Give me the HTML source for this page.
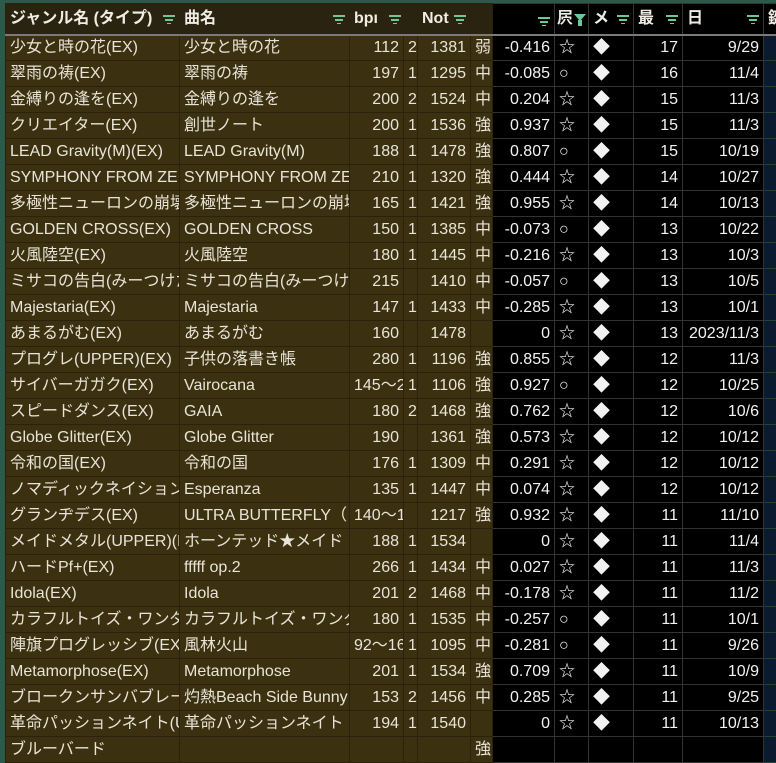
<!DOCTYPE html>
<html><head><meta charset="utf-8">
<style>
body{margin:0;width:776px;height:749px;overflow:hidden;background:#2b5a4a;font-family:"Liberation Sans","Noto Sans CJK JP",sans-serif;}
table{position:absolute;left:5px;top:3px;border-collapse:collapse;table-layout:fixed;width:786px;font-size:16px;color:#e8e4d8}
tr{height:26px}
td{height:26px;line-height:18px;padding:0 4px;white-space:nowrap;overflow:hidden;border:1px solid #2a220c;background:#3b300f;box-sizing:border-box;vertical-align:middle}
tr.h{height:31px}
tr.h td{height:31px;background:#2a2310;font-weight:bold;color:#f0ede4;border-bottom:2px solid #7a7a7a;position:relative}
td.k{background:#000;border-color:#333;color:#f2f2f2}
tr.h td.k{background:#000}
td.l{background:#0b1a2e;border-color:#243}
.r{text-align:right}
.f{display:inline-block;width:12px;height:9px;float:right;margin-top:5px;background:linear-gradient(#6cc79a,#6cc79a) 0 0/12px 2px no-repeat,linear-gradient(#6cc79a,#6cc79a) 2px 4px/8px 2px no-repeat,linear-gradient(#6cc79a,#6cc79a) 4px 8px/4px 1px no-repeat}
.fa{display:inline-block;float:right;margin-top:4px;width:0;height:0;border-left:6px solid transparent;border-right:6px solid transparent;border-top:7px solid #6cc79a;position:relative}
.fa:after{content:"";position:absolute;left:-2px;top:-1px;width:4px;height:6px;background:#6cc79a}
.d{font-size:17px}
</style></head><body>
<table>
<colgroup><col style="width:174px"><col style="width:170px"><col style="width:54px"><col style="width:14px"><col style="width:53px"><col style="width:22px"><col style="width:62px"><col style="width:34px"><col style="width:45px"><col style="width:49px"><col style="width:81px"><col style="width:28px"></colgroup>
<tr class="h"><td>ジャンル名 (タイプ)<span class="f"></span></td><td>曲名<span class="f"></span></td><td style="padding-right:2px">bpı<span class="f"></span></td><td></td><td>Not<span class="f"></span></td><td></td><td class="k"><span class="f"></span></td><td class="k" style="padding:0 2px">屄<span class="fa"></span></td><td class="k">メ<span class="f"></span></td><td class="k">最<span class="f"></span></td><td class="k">日<span class="f"></span></td><td class="k l">鍵</td></tr>
<tr><td>少女と時の花(EX)</td><td>少女と時の花</td><td class="r">112</td><td>2</td><td class="r">1381</td><td>弱</td><td class="k r">-0.416</td><td class="k">☆</td><td class="k d">◆</td><td class="k r">17</td><td class="k r">9/29</td><td class="k l"></td></tr>
<tr><td>翠雨の祷(EX)</td><td>翠雨の祷</td><td class="r">197</td><td>1</td><td class="r">1295</td><td>中</td><td class="k r">-0.085</td><td class="k">○</td><td class="k d">◆</td><td class="k r">16</td><td class="k r">11/4</td><td class="k l"></td></tr>
<tr><td>金縛りの逢を(EX)</td><td>金縛りの逢を</td><td class="r">200</td><td>2</td><td class="r">1524</td><td>中</td><td class="k r">0.204</td><td class="k">☆</td><td class="k d">◆</td><td class="k r">15</td><td class="k r">11/3</td><td class="k l"></td></tr>
<tr><td>クリエイター(EX)</td><td>創世ノート</td><td class="r">200</td><td>1</td><td class="r">1536</td><td>強</td><td class="k r">0.937</td><td class="k">☆</td><td class="k d">◆</td><td class="k r">15</td><td class="k r">11/3</td><td class="k l"></td></tr>
<tr><td>LEAD Gravity(M)(EX)</td><td>LEAD Gravity(M)</td><td class="r">188</td><td>1</td><td class="r">1478</td><td>強</td><td class="k r">0.807</td><td class="k">○</td><td class="k d">◆</td><td class="k r">15</td><td class="k r">10/19</td><td class="k l"></td></tr>
<tr><td>SYMPHONY FROM ZERO</td><td>SYMPHONY FROM ZERO</td><td class="r">210</td><td>1</td><td class="r">1320</td><td>強</td><td class="k r">0.444</td><td class="k">☆</td><td class="k d">◆</td><td class="k r">14</td><td class="k r">10/27</td><td class="k l"></td></tr>
<tr><td>多極性ニューロンの崩壊</td><td>多極性ニューロンの崩壊</td><td class="r">165</td><td>1</td><td class="r">1421</td><td>強</td><td class="k r">0.955</td><td class="k">☆</td><td class="k d">◆</td><td class="k r">14</td><td class="k r">10/13</td><td class="k l"></td></tr>
<tr><td>GOLDEN CROSS(EX)</td><td>GOLDEN CROSS</td><td class="r">150</td><td>1</td><td class="r">1385</td><td>中</td><td class="k r">-0.073</td><td class="k">○</td><td class="k d">◆</td><td class="k r">13</td><td class="k r">10/22</td><td class="k l"></td></tr>
<tr><td>火風陸空(EX)</td><td>火風陸空</td><td class="r">180</td><td>1</td><td class="r">1445</td><td>中</td><td class="k r">-0.216</td><td class="k">☆</td><td class="k d">◆</td><td class="k r">13</td><td class="k r">10/3</td><td class="k l"></td></tr>
<tr><td>ミサコの告白(みーつけた)</td><td>ミサコの告白(みーつけた)</td><td class="r">215</td><td></td><td class="r">1410</td><td>中</td><td class="k r">-0.057</td><td class="k">○</td><td class="k d">◆</td><td class="k r">13</td><td class="k r">10/5</td><td class="k l"></td></tr>
<tr><td>Majestaria(EX)</td><td>Majestaria</td><td class="r">147</td><td>1</td><td class="r">1433</td><td>中</td><td class="k r">-0.285</td><td class="k">☆</td><td class="k d">◆</td><td class="k r">13</td><td class="k r">10/1</td><td class="k l"></td></tr>
<tr><td>あまるがむ(EX)</td><td>あまるがむ</td><td class="r">160</td><td></td><td class="r">1478</td><td></td><td class="k r">0</td><td class="k">☆</td><td class="k d">◆</td><td class="k r">13</td><td class="k r">2023/11/3</td><td class="k l"></td></tr>
<tr><td>プログレ(UPPER)(EX)</td><td>子供の落書き帳</td><td class="r">280</td><td>1</td><td class="r">1196</td><td>強</td><td class="k r">0.855</td><td class="k">☆</td><td class="k d">◆</td><td class="k r">12</td><td class="k r">11/3</td><td class="k l"></td></tr>
<tr><td>サイバーガガク(EX)</td><td>Vairocana</td><td style="padding:0 0 0 4px">145〜2</td><td>1</td><td class="r">1106</td><td>強</td><td class="k r">0.927</td><td class="k">○</td><td class="k d">◆</td><td class="k r">12</td><td class="k r">10/25</td><td class="k l"></td></tr>
<tr><td>スピードダンス(EX)</td><td>GAIA</td><td class="r">180</td><td>2</td><td class="r">1468</td><td>強</td><td class="k r">0.762</td><td class="k">☆</td><td class="k d">◆</td><td class="k r">12</td><td class="k r">10/6</td><td class="k l"></td></tr>
<tr><td>Globe Glitter(EX)</td><td>Globe Glitter</td><td class="r">190</td><td></td><td class="r">1361</td><td>強</td><td class="k r">0.573</td><td class="k">☆</td><td class="k d">◆</td><td class="k r">12</td><td class="k r">10/12</td><td class="k l"></td></tr>
<tr><td>令和の国(EX)</td><td>令和の国</td><td class="r">176</td><td>1</td><td class="r">1309</td><td>中</td><td class="k r">0.291</td><td class="k">☆</td><td class="k d">◆</td><td class="k r">12</td><td class="k r">10/12</td><td class="k l"></td></tr>
<tr><td>ノマディックネイション</td><td>Esperanza</td><td class="r">135</td><td>1</td><td class="r">1447</td><td>中</td><td class="k r">0.074</td><td class="k">☆</td><td class="k d">◆</td><td class="k r">12</td><td class="k r">10/12</td><td class="k l"></td></tr>
<tr><td>グランヂデス(EX)</td><td>ULTRA BUTTERFLY（</td><td style="padding:0 0 0 4px">140〜1</td><td></td><td class="r">1217</td><td>強</td><td class="k r">0.932</td><td class="k">☆</td><td class="k d">◆</td><td class="k r">11</td><td class="k r">11/10</td><td class="k l"></td></tr>
<tr><td>メイドメタル(UPPER)(EX)</td><td>ホーンテッド★メイド</td><td class="r">188</td><td>1</td><td class="r">1534</td><td></td><td class="k r">0</td><td class="k">☆</td><td class="k d">◆</td><td class="k r">11</td><td class="k r">11/4</td><td class="k l"></td></tr>
<tr><td>ハードPf+(EX)</td><td>fffff op.2</td><td class="r">266</td><td>1</td><td class="r">1434</td><td>中</td><td class="k r">0.027</td><td class="k">☆</td><td class="k d">◆</td><td class="k r">11</td><td class="k r">11/3</td><td class="k l"></td></tr>
<tr><td>Idola(EX)</td><td>Idola</td><td class="r">201</td><td>2</td><td class="r">1468</td><td>中</td><td class="k r">-0.178</td><td class="k">☆</td><td class="k d">◆</td><td class="k r">11</td><td class="k r">11/2</td><td class="k l"></td></tr>
<tr><td>カラフルトイズ・ワンダー</td><td>カラフルトイズ・ワンダー</td><td class="r">180</td><td>1</td><td class="r">1535</td><td>中</td><td class="k r">-0.257</td><td class="k">○</td><td class="k d">◆</td><td class="k r">11</td><td class="k r">10/1</td><td class="k l"></td></tr>
<tr><td>陣旗プログレッシブ(EX)</td><td>風林火山</td><td style="padding:0 0 0 4px">92〜16</td><td>1</td><td class="r">1095</td><td>中</td><td class="k r">-0.281</td><td class="k">○</td><td class="k d">◆</td><td class="k r">11</td><td class="k r">9/26</td><td class="k l"></td></tr>
<tr><td>Metamorphose(EX)</td><td>Metamorphose</td><td class="r">201</td><td>1</td><td class="r">1534</td><td>強</td><td class="k r">0.709</td><td class="k">☆</td><td class="k d">◆</td><td class="k r">11</td><td class="k r">10/9</td><td class="k l"></td></tr>
<tr><td>ブロークンサンバブレーカー</td><td>灼熱Beach Side Bunny</td><td class="r">153</td><td>2</td><td class="r">1456</td><td>中</td><td class="k r">0.285</td><td class="k">☆</td><td class="k d">◆</td><td class="k r">11</td><td class="k r">9/25</td><td class="k l"></td></tr>
<tr><td>革命パッションネイト(UPPER)</td><td>革命パッションネイト</td><td class="r">194</td><td>1</td><td class="r">1540</td><td></td><td class="k r">0</td><td class="k">☆</td><td class="k d">◆</td><td class="k r">11</td><td class="k r">10/13</td><td class="k l"></td></tr>
<tr><td>ブルーバード</td><td></td><td></td><td></td><td></td><td>強</td><td class="k"></td><td class="k"></td><td class="k"></td><td class="k"></td><td class="k"></td><td class="k l"></td></tr>
</table>
</body></html>
